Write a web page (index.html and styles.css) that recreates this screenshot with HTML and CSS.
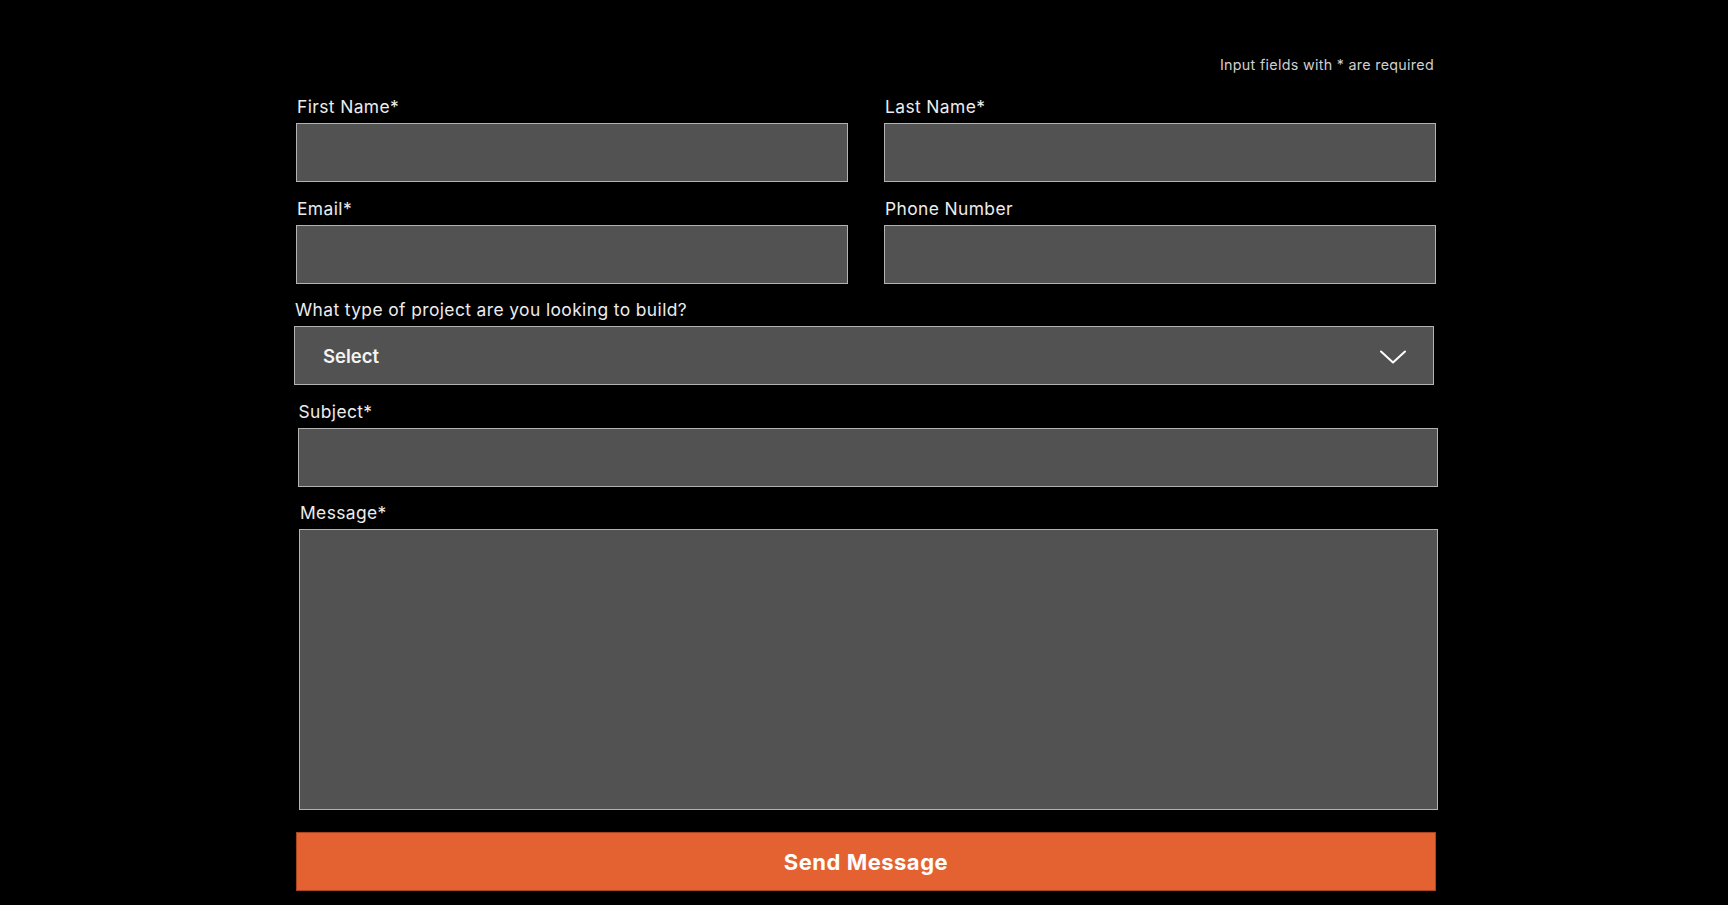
FILE: index.html
```html
<!DOCTYPE html>
<html lang="en">
<head>
<meta charset="utf-8">
<title>Contact form</title>
<link rel="stylesheet" href="styles.css">
</head>
<body>
<div class="page">
  <form class="form">
    <p class="note">Input fields with * are required</p>
    <div class="row">
      <div class="field">
        <label class="label">First Name*</label>
        <div class="input"></div>
      </div>
      <div class="field">
        <label class="label">Last Name*</label>
        <div class="input"></div>
      </div>
    </div>
    <div class="row">
      <div class="field">
        <label class="label">Email*</label>
        <div class="input"></div>
      </div>
      <div class="field">
        <label class="label">Phone Number</label>
        <div class="input"></div>
      </div>
    </div>
    <div class="field field-select">
      <label class="label">What type of project are you looking to build?</label>
      <div class="input select">
        <span class="select-text">Select</span>
        <svg class="chevron" width="26" height="14" viewBox="0 0 26 14" fill="none">
          <path d="M1 1.5 L13 12.5 L25 1.5" stroke="#ffffff" stroke-width="2" stroke-linecap="round" stroke-linejoin="round"/>
        </svg>
      </div>
    </div>
    <div class="field field-subject">
      <label class="label">Subject*</label>
      <div class="input"></div>
    </div>
    <div class="field field-message">
      <label class="label">Message*</label>
      <div class="input textarea"></div>
    </div>
    <button type="button" class="submit">Send Message</button>
  </form>
</div>
</body>
</html>
```

FILE: styles.css
```css
html, body {
  margin: 0;
  padding: 0;
  background: #000000;
}

body {
  font-family: Inter, "Noto Sans", "Liberation Sans", sans-serif;
  color: #ececec;
}

.page {
  display: flex;
  justify-content: center;
  padding-left: 4px;
}

.form {
  width: 1140px;
  display: flex;
  flex-direction: column;
  padding-top: 56px;
}

.note {
  margin: 0 2px 22px 0;
  text-align: right;
  font-size: 14.3px;
  line-height: 18px;
  color: #cfcfcf;
  letter-spacing: 0.3px;
}

.row {
  display: grid;
  grid-template-columns: 1fr 1fr;
  column-gap: 36px;
  margin-bottom: 15.5px;
}

.field {
  display: flex;
  flex-direction: column;
}

.field-select,
.field-subject {
  margin-bottom: 15.5px;
}

.field-select {
  margin-left: -2px;
  margin-right: 2px;
}

.field-subject {
  margin-left: 1.5px;
  margin-right: -1.5px;
}

.field-message {
  margin-left: 3px;
  margin-right: -2px;
  margin-bottom: 22px;
}

.label {
  font-size: 17.4px;
  line-height: 20px;
  padding-top: 1px;
  margin-bottom: 6px;
  padding-left: 1px;
  letter-spacing: 0.4px;
  color: #ececec;
}

.input {
  box-sizing: border-box;
  height: 59px;
  background: #525252;
  border: 1px solid #b3b3b3;
}

.select {
  display: flex;
  align-items: center;
  justify-content: space-between;
  padding: 0 27px 0 28px;
}

.select-text {
  font-size: 18.5px;
  font-weight: 600;
  color: #f4f4f4;
}

.chevron {
  display: block;
  margin-top: 2px;
}

.textarea {
  height: 281px;
}

.submit {
  box-sizing: border-box;
  height: 59px;
  width: 100%;
  border: 1px solid #a94420;
  background: #e46232;
  color: #ffffff;
  font-family: Inter, "Noto Sans", "Liberation Sans", sans-serif;
  font-size: 22px;
  font-weight: 700;
  letter-spacing: 0.5px;
  cursor: pointer;
  padding: 0;
}
```
